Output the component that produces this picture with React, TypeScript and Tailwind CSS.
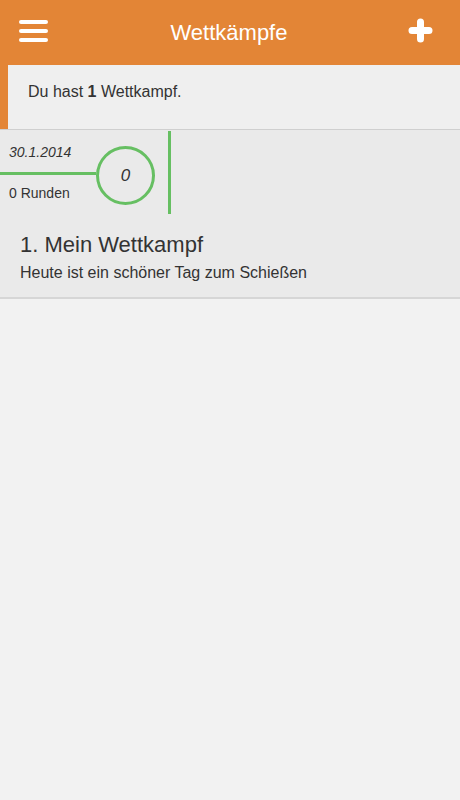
export default function App() {
  return (
    <div className="min-h-[800px] bg-[#f2f2f2] font-['Liberation_Sans',Arial,sans-serif] text-[#333]">
      {/* header */}
      <header className="relative flex h-[65px] items-center justify-center bg-[#e38536]">
        <button className="absolute left-[19px] top-[20px] flex w-[29px] flex-col gap-[5px]">
          <span className="h-[4px] rounded-full bg-white" />
          <span className="h-[4px] rounded-full bg-white" />
          <span className="h-[4px] rounded-full bg-white" />
        </button>
        <h1 className="pr-[2px] text-[22px] leading-none text-white">Wettkämpfe</h1>
        <button className="absolute right-[27px] top-[18px]">
          <svg width="25" height="25" viewBox="0 0 25 25">
            <path d="M12.5 4v17M4 12.5h17" stroke="white" strokeWidth="7" strokeLinecap="round" />
          </svg>
        </button>
      </header>

      {/* info */}
      <div className="flex h-[65px] border-b border-[#cfcfcf] bg-[#efefef]">
        <div className="w-[8px] bg-[#e38536]" />
        <p className="pl-[20px] pt-[17px] text-[16px] leading-[20px]">
          Du hast <b>1</b> Wettkampf.
        </p>
      </div>

      {/* card */}
      <div className="border-b-2 border-[#d6d6d6] bg-[#eaeaea]">
        <div className="flex h-[84px] items-start">
          <div className="w-[96px]">
            <p className="pl-[9px] pt-[12px] text-[14px] italic leading-[20px]">30.1.2014</p>
            <div className="mt-[10px] h-[3px] bg-[#66bf62]" />
            <p className="mt-[8px] pl-[9px] text-[14px] leading-[20px]">0 Runden</p>
          </div>
          <div className="mt-[16px] flex h-[59px] w-[59px] items-center justify-center rounded-full border-[3px] border-[#66bf62]">
            <span className="text-[17px] italic">0</span>
          </div>
          <div className="ml-[13px] mt-px h-[83px] w-[3px] bg-[#66bf62]" />
        </div>
        <div className="px-[20px] pb-[14px] pt-[18px]">
          <h2 className="text-[22px] leading-[26px]">1. Mein Wettkampf</h2>
          <p className="mt-[5px] text-[16px] leading-[20px]">Heute ist ein schöner Tag zum Schießen</p>
        </div>
      </div>
    </div>
  );
}
